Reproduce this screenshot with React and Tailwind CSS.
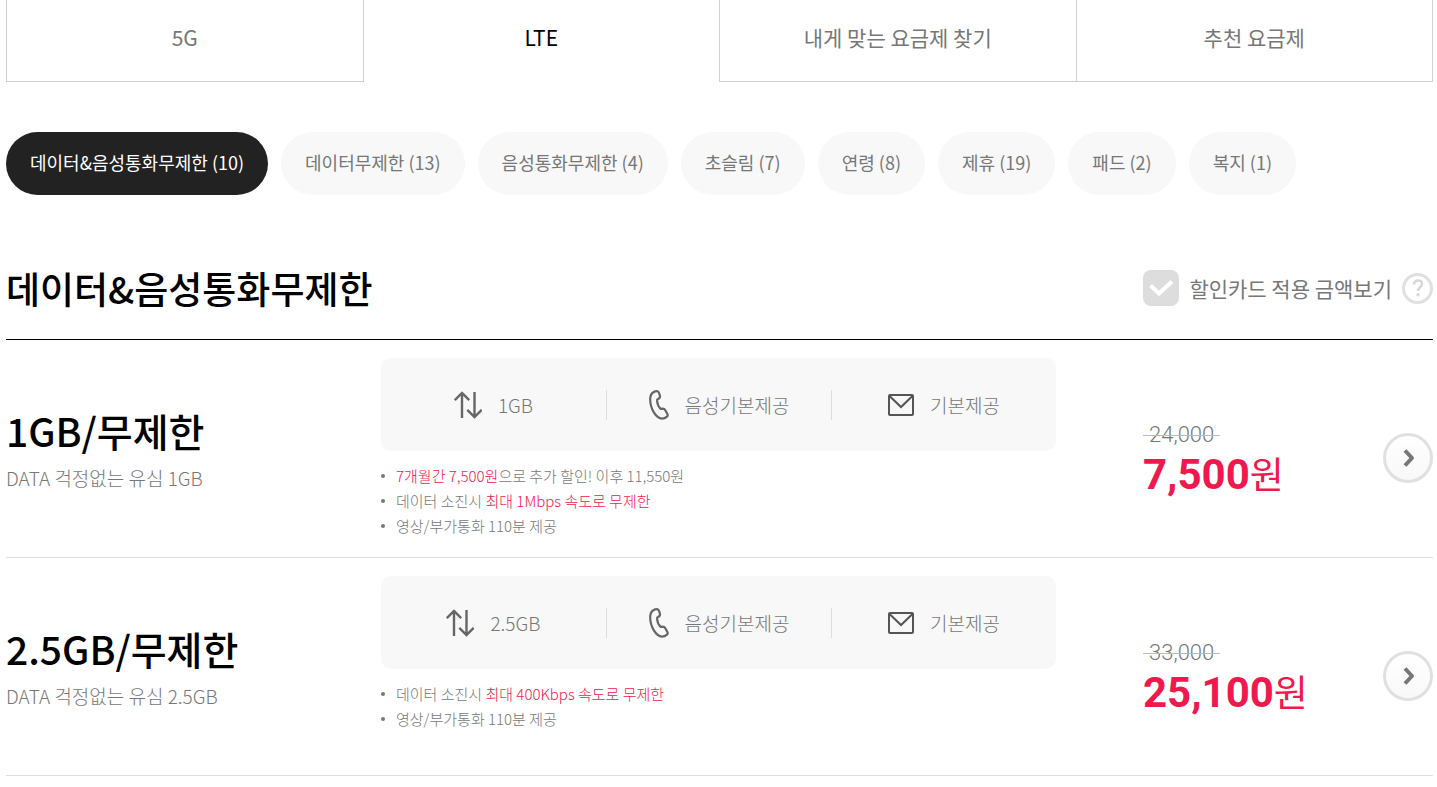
import React, { useState } from "react";

const TABS = ["5G", "LTE", "내게 맞는 요금제 찾기", "추천 요금제"];

const CATEGORIES = [
  { name: "데이터&음성통화무제한", count: 10 },
  { name: "데이터무제한", count: 13 },
  { name: "음성통화무제한", count: 4 },
  { name: "초슬림", count: 7 },
  { name: "연령", count: 8 },
  { name: "제휴", count: 19 },
  { name: "패드", count: 2 },
  { name: "복지", count: 1 },
];

const PLANS = [
  {
    title: "1GB/무제한",
    summary: "DATA 걱정없는 유심 1GB",
    data: "1GB",
    voice: "음성기본제공",
    sms: "기본제공",
    notes: [
      { highlight: "7개월간 7,500원", after: "으로 추가 할인! 이후 11,550원" },
      { before: "데이터 소진시 ", highlight: "최대 1Mbps 속도로 무제한" },
      { before: "영상/부가통화 110분 제공" },
    ],
    originalPrice: 24000,
    price: 7500,
  },
  {
    title: "2.5GB/무제한",
    summary: "DATA 걱정없는 유심 2.5GB",
    data: "2.5GB",
    voice: "음성기본제공",
    sms: "기본제공",
    notes: [
      { before: "데이터 소진시 ", highlight: "최대 400Kbps 속도로 무제한" },
      { before: "영상/부가통화 110분 제공" },
    ],
    originalPrice: 33000,
    price: 25100,
  },
];

function DataIcon() {
  return (
    <svg width="28" height="28" viewBox="0 0 28 28" fill="none" stroke="#666" strokeWidth="2.4" aria-hidden="true">
      <path d="M8 27V2M.8 9.2 8 2l7.2 7.2" />
      <path d="M20.500 1v25M13.300 18.800l7.200 7.200 7.200-7.200" />
    </svg>
  );
}

function PhoneIcon() {
  return (
    <svg width="20" height="30" viewBox="0 0 20 30" fill="none" stroke="#666" strokeWidth="2.2" strokeLinejoin="round" aria-hidden="true">
      <path d="M4 2.500c1.400-.9 2.800-1.300 4-1.300 1.300 0 1.700.7 2.100 1.900l.8 2.700c.4 1.300 0 2-1 2.700L8.200 9.700c-.3 3.400.9 6.500 3.300 9.100l2.200-.1c1.300 0 2 .4 2.600 1.500l2.100 3.900c.6 1.200.5 1.800-.4 2.500-1.500 1.300-3.200 2-4.900 2C7 28.600 1.200 18.500 1.200 9.600c0-3.100.8-5.800 2.800-7.100Z" />
    </svg>
  );
}

function MailIcon() {
  return (
    <svg width="26" height="22" viewBox="0 0 26 22" fill="none" stroke="#555" strokeWidth="2" aria-hidden="true">
      <rect x="1" y="1" width="24" height="20" rx="1" />
      <path d="m1.500 2 11.500 11L24.500 2" />
    </svg>
  );
}

function PlanRow({ plan }) {
  const specs = [
    { icon: <DataIcon />, label: plan.data },
    { icon: <PhoneIcon />, label: plan.voice },
    { icon: <MailIcon />, label: plan.sms },
  ];

  return (
    <li className="grid min-h-[218px] grid-cols-[375fr_675fr_377fr] items-center border-b border-[#ddd] pt-[18px]">
      {/* Plan name */}
      <div className="pb-4">
        <h3 className="text-[39px] leading-[56px] font-medium text-black">{plan.title}</h3>
        <p className="text-[19px] leading-10 font-light">{plan.summary}</p>
      </div>

      {/* Allowances */}
      <div className="self-start">
        <ul className="grid grid-cols-3 rounded-[10px] bg-[#f8f8f8] pt-8 pb-[31px]">
          {specs.map((spec, i) => (
            <li
              key={i}
              className={`flex h-[30px] items-center justify-center gap-4 text-[19px] font-light ${i > 0 ? "border-l border-[#ddd]" : ""}`}
            >
              {spec.icon}
              {spec.label}
            </li>
          ))}
        </ul>
        <ul className="mt-3 text-[15px] leading-[25px] font-light">
          {plan.notes.map((note, i) => (
            <li key={i} className="flex items-center gap-[11px]">
              <span className="size-1 rounded-full bg-[#777]" />
              <span>
                {note.before}
                {note.highlight && <em className="text-[#f0184c] not-italic">{note.highlight}</em>}
                {note.after}
              </span>
            </li>
          ))}
        </ul>
      </div>

      {/* Price */}
      <div className="flex items-center justify-between pl-[87px]">
        <div>
          <del className="relative inline-block px-1.5 font-[Roboto] text-[22px] leading-8 font-light no-underline">
            {plan.originalPrice.toLocaleString("en-US")}
            <span className="absolute inset-x-0 top-1/2 h-px bg-[#bbb]" />
          </del>
          <p className="text-[#f0184c]">
            <strong className="font-[Roboto] text-[42px] leading-[44px] font-bold">{plan.price.toLocaleString("en-US")}</strong>
            <span className="text-[37px] leading-[44px]">원</span>
          </p>
        </div>
        <a
          href="#"
          aria-label={plan.title}
          className="flex size-[50px] items-center justify-center rounded-full border-3 border-[#e0e0e0] bg-linear-to-b from-white to-[#f8f8f8]"
        >
          <svg width="14" height="20" viewBox="0 0 14 20" fill="none" stroke="#777" strokeWidth="4" strokeLinejoin="round" aria-hidden="true">
            <path d="m4 2.500 7 7.500-7 7.500" />
          </svg>
        </a>
      </div>
    </li>
  );
}

export default function App() {
  const [activeTab, setActiveTab] = useState(1);
  const [activeCategory, setActiveCategory] = useState(0);
  const [cardDiscount, setCardDiscount] = useState(false);

  return (
    <main className="bg-white pr-1 pl-1.5 font-['Noto_Sans_CJK_KR',sans-serif] text-[#777]">
      {/* Network tabs */}
      <nav className="flex">
        {TABS.map((tab, i) => (
          <button
            key={tab}
            onClick={() => setActiveTab(i)}
            className={`flex-1 cursor-pointer border-b pt-[21px] pb-7 text-[21px] leading-8
              ${activeTab === i ? "border-transparent text-black" : "border-[#d0d0d0]"}
              ${activeTab !== i ? "border-l last:border-r" : ""}
              ${activeTab === i + 1 ? "border-r" : ""}
            `}
          >
            {tab}
          </button>
        ))}
      </nav>

      {/* Category filters */}
      <div className="mt-[50px] flex flex-wrap gap-[13px]">
        {CATEGORIES.map((category, i) => (
          <button
            key={category.name}
            onClick={() => setActiveCategory(i)}
            className={`cursor-pointer rounded-full px-6 pt-[17px] pb-[19px] text-[18px] leading-[27px]
              ${activeCategory === i ? "bg-[#222] text-white" : "bg-[#f8f8f8]"}
            `}
          >
            {category.name} ({category.count})
          </button>
        ))}
      </div>

      <section>
        <header className="flex items-center justify-between border-b border-black pt-[62px] pb-5">
          <h2 className="text-[37px] leading-[62px] font-medium text-black">{CATEGORIES[activeCategory].name}</h2>
          <div className="flex items-center gap-2.5">
            <label className="flex cursor-pointer items-center gap-2.5 text-[21px] leading-9">
              <span className="relative flex">
                <input
                  type="checkbox"
                  checked={cardDiscount}
                  onChange={(e) => setCardDiscount(e.target.checked)}
                  className="size-9 cursor-pointer appearance-none rounded-lg bg-[#ddd] checked:bg-[#f0184c]"
                />
                <svg className="pointer-events-none absolute inset-0" width="36" height="36" viewBox="0 0 36 36" fill="none" stroke="#fff" strokeWidth="4" aria-hidden="true">
                  <path d="m7.500 15.500 8.500 8L29 11.500" />
                </svg>
              </span>
              할인카드 적용 금액보기
            </label>
            <button
              aria-label="할인카드 안내"
              className="flex size-[31px] cursor-pointer items-center justify-center rounded-full border-3 border-[#e0e0e0]"
            >
              <svg width="12" height="18" viewBox="0 0 12 18" fill="none" stroke="#d8d8d8" strokeWidth="2.600" aria-hidden="true">
                <path d="M2 5.500C2 3 3.600 1.500 6 1.500s4 1.300 4 3.500c0 3.200-4 3.300-4 7" />
                <circle cx="6" cy="15.800" r="1.700" fill="#d8d8d8" stroke="none" />
              </svg>
            </button>
          </div>
        </header>

        <ul>
          {PLANS.map((plan) => (
            <PlanRow key={plan.title} plan={plan} />
          ))}
        </ul>
      </section>
    </main>
  );
}
